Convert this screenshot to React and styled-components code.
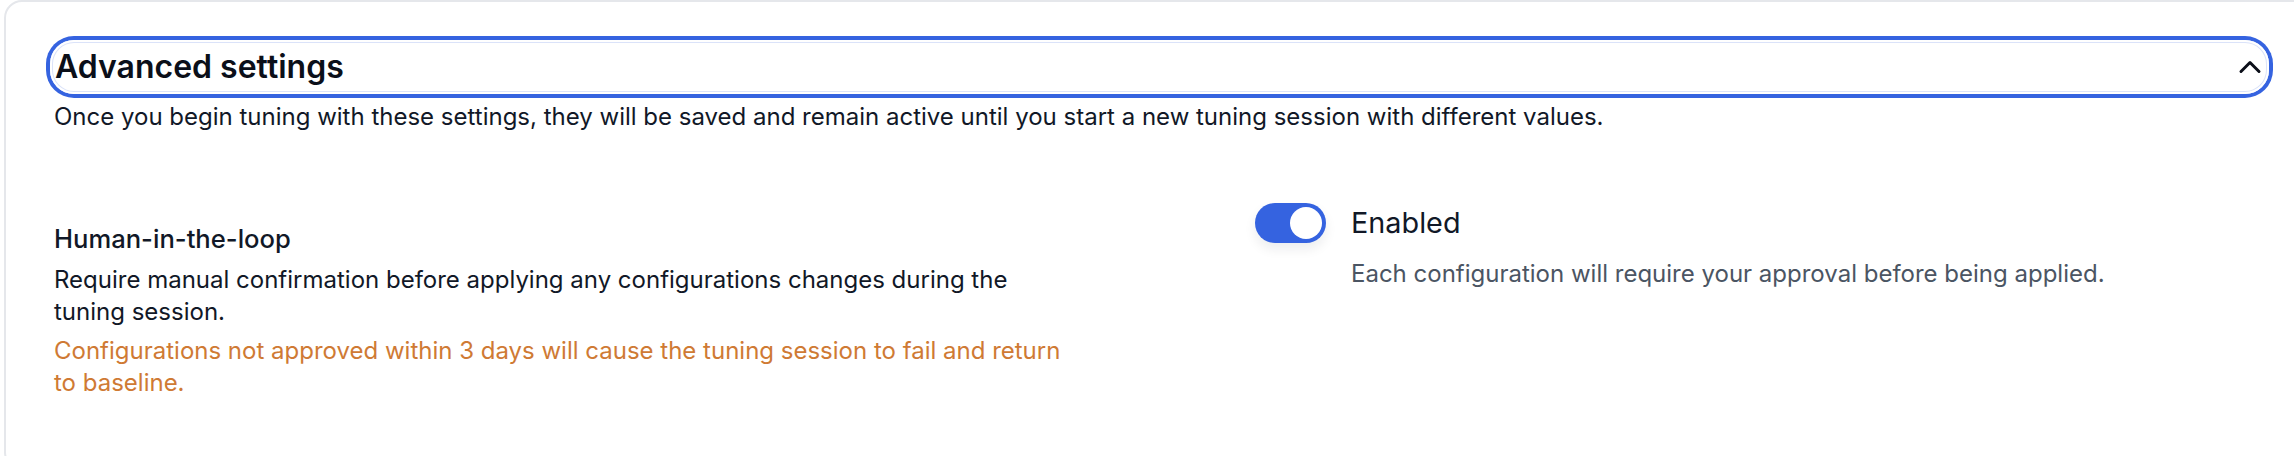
import React, { useState } from "react";
import styled, { createGlobalStyle } from "styled-components";
import { ChevronUp } from "lucide-react";

const GlobalStyle = createGlobalStyle`
  html, body {
    margin: 0;
    padding: 0;
    background: #ffffff;
  }
  body {
    font-family: Inter, "Noto Sans", sans-serif;
    color: #111827;
    -webkit-font-smoothing: antialiased;
  }
  * {
    box-sizing: border-box;
  }
`;

const Page = styled.div`
  padding-left: 4px;
  height: 456px;
  overflow: hidden;
`;

const Card = styled.section`
  width: 2311px;
  min-height: 470px;
  border: 2px solid #e5e7eb;
  border-radius: 18px;
  padding: 36px 44px 0 44px;
  background: #ffffff;
`;

const HeaderButton = styled.button`
  display: flex;
  align-items: center;
  justify-content: space-between;
  width: 100%;
  height: 54px;
  margin: 2px 0 0 0;
  padding: 0 1px 0 5px;
  border: none;
  border-radius: 24px;
  background: #ffffff;
  cursor: pointer;
  font-family: inherit;
  box-shadow: 0 0 0 4px #3563e0, inset 0 0 0 2px #ffffff,
    inset 0 0 0 3px rgba(53, 99, 224, 0.18);
`;

const HeaderTitle = styled.span`
  font-size: 32px;
  line-height: 48px;
  font-weight: 600;
  color: #0b0f19;
`;

const Intro = styled.p`
  margin: 6.5px 0 0 4px;
  font-size: 24px;
  line-height: 32px;
  color: #111827;
`;

const SettingRow = styled.div`
  display: grid;
  grid-template-columns: 1020px 1fr;
  column-gap: 181px;
  align-items: start;
  margin-top: 70px;
  padding-left: 4px;
`;

const SettingInfo = styled.div`
  padding-top: 17.5px;
`;

const SettingTitle = styled.h3`
  margin: 0 0 5.3px 0;
  font-size: 25.6px;
  line-height: 38.4px;
  font-weight: 500;
  color: #111827;
`;

const SettingText = styled.p`
  margin: 0;
  font-size: 24px;
  line-height: 32px;
  color: ${(p) => (p.$warn ? "#cf7a34" : "#111827")};
  & + & {
    margin-top: 7.5px;
  }
`;

const ControlColumn = styled.div`
  display: flex;
  flex-direction: column;
`;

const ToggleLine = styled.label`
  display: flex;
  align-items: center;
  gap: 25px;
  cursor: pointer;
`;

const Track = styled.button`
  position: relative;
  width: 71px;
  height: 40px;
  padding: 0;
  border: none;
  border-radius: 20px;
  background: ${(p) => (p.$on ? "#3563e0" : "#d1d5db")};
  box-shadow: 0 6px 12px rgba(17, 24, 39, 0.08);
  cursor: pointer;
  flex-shrink: 0;
`;

const Knob = styled.span`
  position: absolute;
  top: 4px;
  left: ${(p) => (p.$on ? "35px" : "4px")};
  width: 32px;
  height: 32px;
  border-radius: 50%;
  background: #ffffff;
  transition: left 0.15s ease;
`;

const ToggleLabel = styled.span`
  font-size: 28.8px;
  line-height: 40px;
  color: #111827;
`;

const ToggleHint = styled.p`
  margin: 15.5px 0 0 96px;
  font-size: 24px;
  line-height: 32px;
  color: #4b5563;
`;

export default function App() {
  const [open, setOpen] = useState(true);
  const [enabled, setEnabled] = useState(true);

  return (
    <Page>
      <GlobalStyle />
      <Card>
        <HeaderButton onClick={() => setOpen(!open)}>
          <HeaderTitle>Advanced settings</HeaderTitle>
          <ChevronUp size={36} strokeWidth={2} color="#0b0f19" />
        </HeaderButton>
        {open && (
          <>
            <Intro>
              Once you begin tuning with these settings, they will be saved and
              remain active until you start a new tuning session with different
              values.
            </Intro>
            <SettingRow>
              <SettingInfo>
                <SettingTitle>Human-in-the-loop</SettingTitle>
                <SettingText>
                  Require manual confirmation before applying any configurations
                  changes during the tuning session.
                </SettingText>
                <SettingText $warn>
                  Configurations not approved within 3 days will cause the tuning
                  session to fail and return to baseline.
                </SettingText>
              </SettingInfo>
              <ControlColumn>
                <ToggleLine>
                  <Track $on={enabled} onClick={() => setEnabled(!enabled)}>
                    <Knob $on={enabled} />
                  </Track>
                  <ToggleLabel>{enabled ? "Enabled" : "Disabled"}</ToggleLabel>
                </ToggleLine>
                <ToggleHint>
                  Each configuration will require your approval before being
                  applied.
                </ToggleHint>
              </ControlColumn>
            </SettingRow>
          </>
        )}
      </Card>
    </Page>
  );
}
